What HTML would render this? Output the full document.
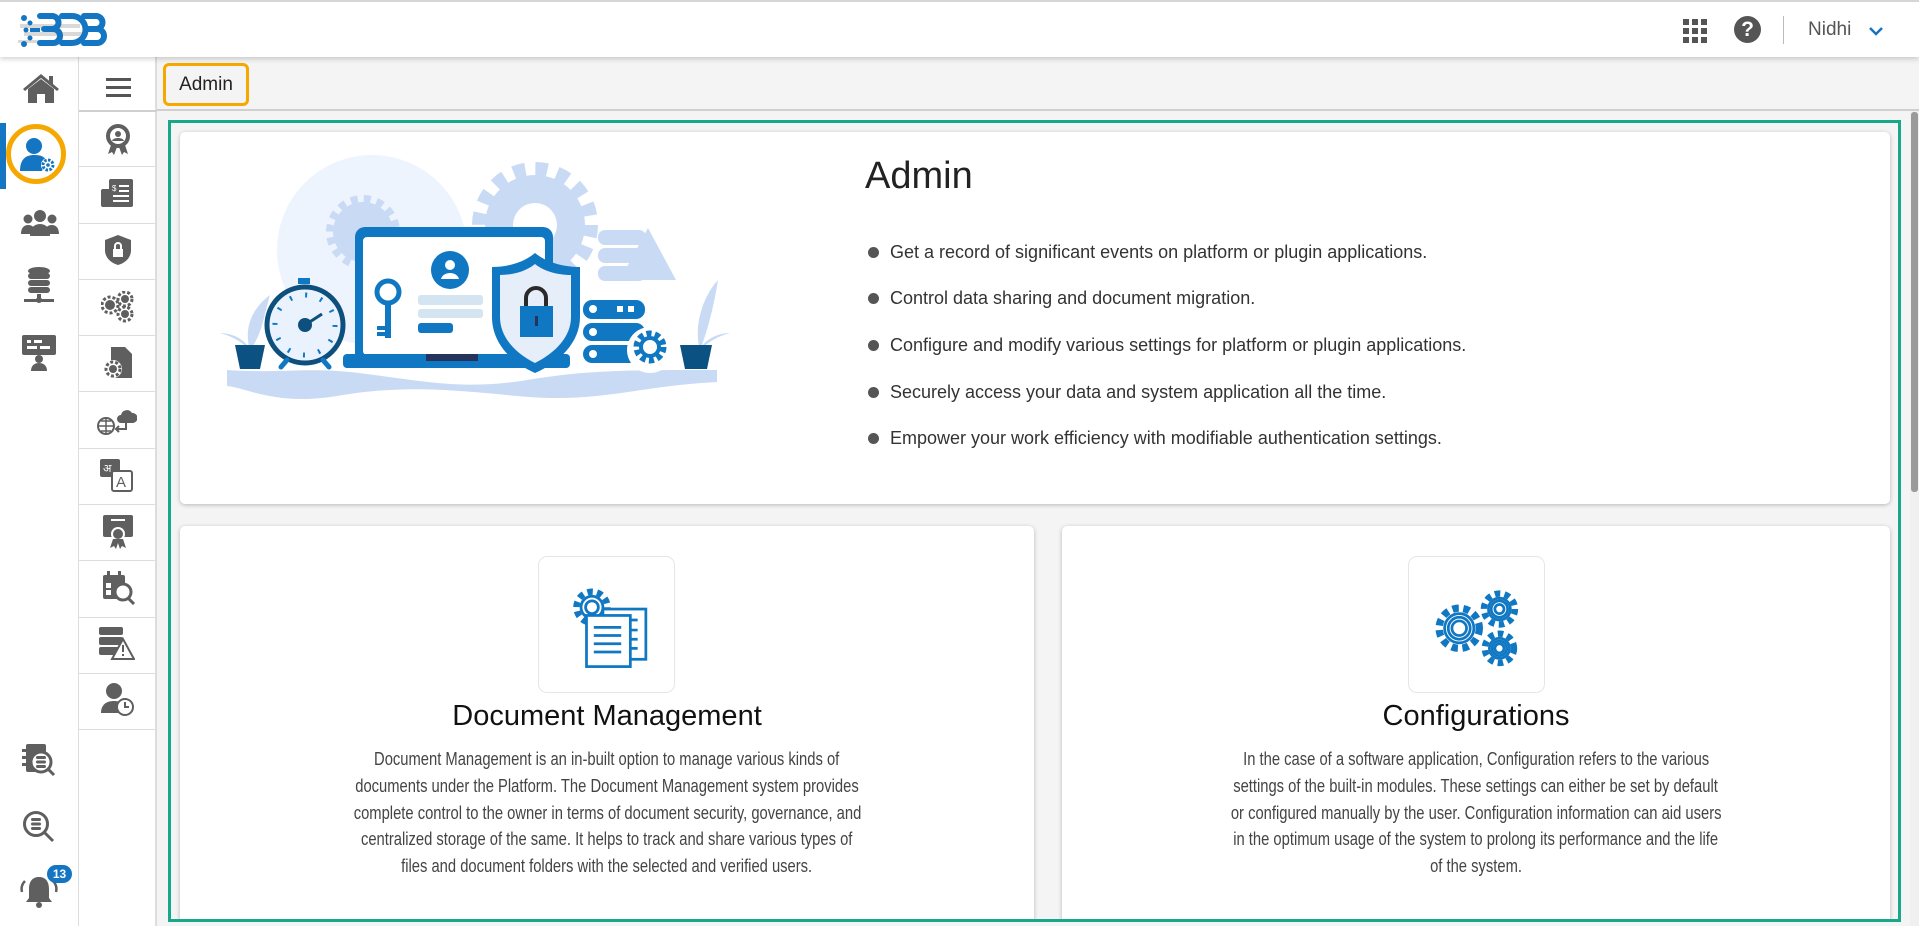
<!DOCTYPE html>
<html style="width:1919px;height:926px;overflow:hidden"><head><meta charset="utf-8"><style>
*{box-sizing:border-box;margin:0;padding:0}
body{width:1919px;height:926px;overflow:hidden;background:#f4f4f4;font-family:"Liberation Sans",sans-serif;position:relative}
.abs{position:absolute}
#hdr{left:0;top:0;width:1919px;height:57px;background:#fff;border-top:2px solid #d6d6d6;box-shadow:0 2px 5px rgba(0,0,0,.18);z-index:5}
#rail{left:0;top:57px;width:79px;height:869px;background:#fff;border-right:1px solid #ddd;overflow:hidden}
#side{left:79px;top:57px;width:78px;height:869px;background:#fff;border-right:2px solid #ddd}
.sep{position:absolute;left:0;width:78px;height:1px;background:#ddd}
#crumb{left:157px;top:57px;width:1762px;height:54px;background:#f4f4f4;border-bottom:2px solid #d0d0d0}
.card{position:absolute;background:#fff;border-radius:5px;box-shadow:0 1px 4px rgba(0,0,0,.25)}
.bl{position:absolute;left:890px;font-size:18px;color:#333;white-space:nowrap}
.dot{position:absolute;left:868px;width:11px;height:11px;border-radius:50%;background:#555}
.ttl{position:absolute;font-size:29px;color:#111;text-align:center}
.par{position:absolute;font-size:18px;color:#444;text-align:center;line-height:26.8px;white-space:nowrap}
.par span{display:inline-block;transform:scaleX(.82)}
.ib{position:absolute;width:137px;height:137px;border:1px solid #e6e6e6;border-radius:9px;background:#fff}
</style></head><body>

<div id="hdr" class="abs">
 <svg class="abs" style="left:16px;top:8px" width="96" height="42" viewBox="0 0 96 42">
  <g fill="#d9d9d9"><rect x="4" y="14" width="60" height="4"/><rect x="8" y="22" width="60" height="4"/><rect x="2" y="30" width="50" height="3"/></g>
  <g fill="none" stroke="#1475c2" stroke-width="6" stroke-linecap="round">
   <path d="M24 6h12a6 6 0 0 1 0 13h-8M28 19h9a7 7 0 0 1 0 14h-13"/>
   <path d="M46 6h10a13 13 0 0 1 0 27h-10"/>
   <path d="M68 6h12a6 6 0 0 1 0 13h-8M72 19h9a7 7 0 0 1 0 14h-13"/>
  </g>
  <g fill="#1475c2"><circle cx="8" cy="8" r="3"/><circle cx="14" cy="13" r="2.5"/><circle cx="10" cy="20" r="2.5"/><circle cx="14" cy="28" r="2.5"/><circle cx="8" cy="34" r="3"/><rect x="14" y="18" width="10" height="4"/></g>
 </svg>
 <svg class="abs" style="left:1683px;top:17px" width="24" height="24" viewBox="0 0 24 24" fill="#555">
  <rect x="0" y="0" width="6" height="6"/><rect x="9" y="0" width="6" height="6"/><rect x="18" y="0" width="6" height="6"/>
  <rect x="0" y="9" width="6" height="6"/><rect x="9" y="9" width="6" height="6"/><rect x="18" y="9" width="6" height="6"/>
  <rect x="0" y="18" width="6" height="6"/><rect x="9" y="18" width="6" height="6"/><rect x="18" y="18" width="6" height="6"/>
 </svg>
 <div class="abs" style="left:1734px;top:14px;width:27px;height:27px;border-radius:50%;background:#555;color:#fff;font-weight:bold;font-size:21px;text-align:center;line-height:27px">?</div>
 <div class="abs" style="left:1783px;top:14px;width:1px;height:28px;background:#bbb"></div>
 <div class="abs" style="left:1808px;top:17px;font-size:19px;color:#555">Nidhi</div>
 <svg class="abs" style="left:1868px;top:24px" width="16" height="10" viewBox="0 0 16 10"><path d="M2 2l6 6 6-6" stroke="#1475c2" stroke-width="2.5" fill="none"/></svg>
</div>

<div id="rail" class="abs">
 <svg class="abs" style="left:22px;top:15px" width="38" height="32" viewBox="0 0 38 32" fill="#5f5f5f"><path d="M19 2L1 17l2 2 16-13 16 13 2-2z"/><path d="M6 17l13-10 13 10v14h-9v-9h-8v9H6z"/><rect x="27" y="4" width="4" height="8"/></svg>
 <div class="abs" style="left:0;top:66px;width:6px;height:66px;background:#1475c2"></div>
 <div class="abs" style="left:6px;top:67px;width:60px;height:60px;border:5px solid #f5a800;border-radius:50%"></div>
 <svg class="abs" style="left:20px;top:80px" width="36" height="36" viewBox="0 0 36 36"><circle cx="14" cy="9" r="8" fill="#1475c2"/><path d="M0 34c0-12 6-16 14-16s10 2 12 5l-4 11z" fill="#1475c2"/><circle cx="28" cy="28" r="7" fill="#fff"/><circle cx="28" cy="28" r="5" fill="none" stroke="#1475c2" stroke-width="3" stroke-dasharray="2.5 1.4"/><circle cx="28" cy="28" r="1.8" fill="#1475c2"/></svg>
 <svg class="abs" style="left:21px;top:153px" width="38" height="26" viewBox="0 0 38 26" fill="#5f5f5f"><circle cx="19" cy="6" r="6"/><circle cx="7" cy="9" r="4.5"/><circle cx="31" cy="9" r="4.5"/><path d="M9 26c0-8 4-12 10-12s10 4 10 12z"/><path d="M0 24c0-6 3-9 7-9s6 2 6 4v5zM38 24c0-6-3-9-7-9s-6 2-6 4v5z"/></svg>
 <svg class="abs" style="left:24px;top:210px" width="30" height="36" viewBox="0 0 30 36" fill="#5f5f5f"><ellipse cx="15" cy="4" rx="11" ry="4"/><rect x="4" y="6" width="22" height="6" rx="3"/><rect x="4" y="13" width="22" height="6" rx="3"/><rect x="4" y="20" width="22" height="6" rx="3"/><rect x="13" y="27" width="4" height="5"/><rect x="0" y="32" width="30" height="3"/><circle cx="15" cy="33" r="3"/></svg>
 <svg class="abs" style="left:22px;top:278px" width="34" height="36" viewBox="0 0 34 36" fill="#5f5f5f"><rect x="0" y="0" width="34" height="20" rx="2"/><rect x="5" y="5" width="4" height="3" fill="#fff"/><rect x="12" y="5" width="8" height="3" fill="#fff"/><rect x="5" y="11" width="10" height="3" fill="#fff"/><rect x="18" y="11" width="10" height="3" fill="#fff"/><circle cx="17" cy="24" r="4"/><path d="M9 36c0-6 4-8 8-8s8 2 8 8z"/></svg>
 <svg class="abs" style="left:22px;top:687px" width="34" height="36" viewBox="0 0 34 36" fill="#5f5f5f"><rect x="4" y="0" width="20" height="28" rx="2"/><rect x="0" y="5" width="6" height="3"/><rect x="0" y="12" width="6" height="3"/><rect x="0" y="19" width="6" height="3"/><circle cx="19" cy="18" r="10" fill="#fff" stroke="#5f5f5f" stroke-width="3"/><rect x="14" y="12" width="10" height="3" rx="1.5"/><rect x="14" y="16.5" width="10" height="3" rx="1.5"/><rect x="14" y="21" width="10" height="3" rx="1.5"/><path d="M26 25l6 6" stroke="#5f5f5f" stroke-width="3"/></svg>
 <svg class="abs" style="left:22px;top:753px" width="34" height="34" viewBox="0 0 34 34"><circle cx="14" cy="14" r="11.5" fill="none" stroke="#5f5f5f" stroke-width="3"/><g fill="#5f5f5f"><rect x="9" y="8" width="10" height="3" rx="1.5"/><rect x="9" y="12.5" width="10" height="3" rx="1.5"/><rect x="9" y="17" width="10" height="3" rx="1.5"/></g><path d="M23 23l8 8" stroke="#5f5f5f" stroke-width="3"/></svg>
 <svg class="abs" style="left:20px;top:812px" width="38" height="42" viewBox="0 0 38 42" fill="#5f5f5f"><path d="M19 8c-7 0-10 5-10 12v9l-3 4h26l-3-4v-9c0-7-3-12-10-12z"/><circle cx="19" cy="36" r="3"/><path d="M5 12c-3 3-4 7-3 11M33 12c3 3 4 7 3 11" stroke="#5f5f5f" stroke-width="2.5" fill="none"/></svg>
 <div class="abs" style="left:47px;top:808px;width:25px;height:18px;border-radius:9px;background:#1475c2;color:#fff;font-size:12px;font-weight:bold;text-align:center;line-height:18px">13</div>
</div>

<div id="side" class="abs">
 <div class="abs" style="left:27px;top:21px;width:25px;height:3px;background:#555;box-shadow:0 8px 0 #555,0 16px 0 #555"></div>
 <div class="sep" style="top:53px;height:2px;background:#d0d0d0"></div>
 <div class="sep" style="top:109px"></div><div class="sep" style="top:166px"></div><div class="sep" style="top:222px"></div><div class="sep" style="top:278px"></div><div class="sep" style="top:334px"></div><div class="sep" style="top:391px"></div><div class="sep" style="top:447px"></div><div class="sep" style="top:503px"></div><div class="sep" style="top:560px"></div><div class="sep" style="top:616px"></div><div class="sep" style="top:672px"></div>
 <svg class="abs" style="left:24px;top:66px" width="30" height="32" viewBox="0 0 30 32" fill="#5f5f5f"><circle cx="15" cy="13" r="12"/><circle cx="15" cy="13" r="8" fill="#fff"/><circle cx="15" cy="11" r="3"/><path d="M9 18c1-4 11-4 12 0z"/><path d="M8 22l-3 9 4-2 2 3 3-8zM22 22l3 9-4-2-2 3-3-8z"/></svg>
 <svg class="abs" style="left:22px;top:122px" width="34" height="30" viewBox="0 0 34 30" fill="#5f5f5f"><rect x="8" y="0" width="24" height="28" rx="2"/><rect x="0" y="10" width="10" height="18" rx="2"/><g fill="#fff"><rect x="18" y="6" width="10" height="2"/><rect x="18" y="11" width="10" height="2"/><rect x="12" y="16" width="16" height="2"/><rect x="12" y="21" width="16" height="2"/></g><text x="11" y="12" font-size="8" fill="#fff" font-family="Liberation Sans">$</text></svg>
 <svg class="abs" style="left:26px;top:178px" width="26" height="30" viewBox="0 0 26 30" fill="#5f5f5f"><path d="M13 0l13 5v10c0 8-6 13-13 15C6 28 0 23 0 15V5z"/><rect x="8" y="14" width="10" height="8" fill="#fff"/><path d="M10 14v-3a3 3 0 0 1 6 0v3" stroke="#fff" stroke-width="2" fill="none"/></svg>
 <svg class="abs" style="left:22px;top:234px" width="34" height="32" viewBox="0 0 34 32" fill="#5f5f5f"><circle cx="9" cy="14" r="8" stroke="#5f5f5f" stroke-width="3" stroke-dasharray="3 2" fill="none"/><circle cx="9" cy="14" r="5"/><circle cx="24" cy="8" r="7" stroke="#5f5f5f" stroke-width="3" stroke-dasharray="3 2" fill="none"/><circle cx="24" cy="8" r="4"/><circle cx="24" cy="23" r="7" stroke="#5f5f5f" stroke-width="3" stroke-dasharray="3 2" fill="none"/><circle cx="24" cy="23" r="4"/></svg>
 <svg class="abs" style="left:24px;top:290px" width="30" height="32" viewBox="0 0 30 32" fill="#5f5f5f"><path d="M8 0h14l7 7v24H8z"/><circle cx="10" cy="22" r="9" fill="#fff"/><circle cx="10" cy="22" r="7" stroke="#5f5f5f" stroke-width="3" stroke-dasharray="3 2" fill="none"/><circle cx="10" cy="22" r="4"/></svg>
 <svg class="abs" style="left:18px;top:346px" width="40" height="32" viewBox="0 0 40 32"><circle cx="9" cy="23" r="8" fill="none" stroke="#5f5f5f" stroke-width="2"/><path d="M1 23h16M9 15v16M4 18h10M4 28h10" stroke="#5f5f5f" stroke-width="1.5"/><path d="M24 12a6 6 0 0 1 11-2 5 5 0 0 1 1 10H24a4 4 0 0 1 0-8z" fill="#5f5f5f"/><path d="M29 18v8h-9M22 23l-3 3 3 3" stroke="#5f5f5f" stroke-width="2" fill="none"/></svg>
 <svg class="abs" style="left:21px;top:402px" width="34" height="34" viewBox="0 0 34 34"><rect x="0" y="0" width="20" height="18" rx="2" fill="#5f5f5f"/><text x="3" y="13" font-size="11" fill="#fff" font-family="Noto Sans CJK SC,sans-serif">अ</text><rect x="12" y="12" width="20" height="20" rx="2" fill="#fff" stroke="#5f5f5f" stroke-width="2"/><text x="16" y="28" font-size="15" fill="#5f5f5f" font-family="Liberation Sans">A</text></svg>
 <svg class="abs" style="left:24px;top:458px" width="30" height="34" viewBox="0 0 30 34" fill="#5f5f5f"><rect x="0" y="0" width="30" height="22" rx="2"/><rect x="8" y="4" width="14" height="2" fill="#fff"/><circle cx="15" cy="19" r="7" fill="#fff"/><circle cx="15" cy="19" r="5"/><path d="M10 24l-3 9 4-2 2 3 2-6 2 6 2-3 4 2-3-9z"/></svg>
 <svg class="abs" style="left:24px;top:514px" width="32" height="34" viewBox="0 0 32 34" fill="#5f5f5f"><rect x="0" y="4" width="22" height="24" rx="2"/><rect x="4" y="0" width="3" height="6"/><rect x="15" y="0" width="3" height="6"/><rect x="3" y="12" width="5" height="5" fill="#fff"/><rect x="3" y="19" width="5" height="5" fill="#fff"/><circle cx="20" cy="21" r="8" fill="#fff" stroke="#5f5f5f" stroke-width="3"/><path d="M25 27l6 6" stroke="#5f5f5f" stroke-width="3"/></svg>
 <svg class="abs" style="left:20px;top:570px" width="36" height="34" viewBox="0 0 36 34" fill="#5f5f5f"><rect x="0" y="0" width="24" height="8" rx="2"/><rect x="0" y="10" width="24" height="8" rx="2"/><rect x="0" y="20" width="20" height="8" rx="2"/><path d="M24 12l11 20H13z" fill="#fff" stroke="#5f5f5f" stroke-width="2"/><rect x="23" y="18" width="2" height="7"/><rect x="23" y="27" width="2" height="2"/></svg>
 <svg class="abs" style="left:22px;top:626px" width="34" height="34" viewBox="0 0 34 34" fill="#5f5f5f"><circle cx="13" cy="8" r="8"/><path d="M0 30c0-8 5-12 13-12 4 0 7 1 9 3l-4 9z"/><circle cx="24" cy="24" r="8" fill="#fff" stroke="#5f5f5f" stroke-width="2"/><path d="M24 19v5h4" stroke="#5f5f5f" stroke-width="2" fill="none"/></svg>
</div>

<div id="crumb" class="abs">
 <div class="abs" style="left:6px;top:6px;width:86px;height:43px;border:3px solid #f5a800;border-radius:6px;font-size:19px;color:#222;text-align:center;line-height:37px">Admin</div>
</div>

<div class="abs" style="left:1910px;top:111px;width:9px;height:815px;background:#f0f0f0"></div>
<div class="abs" style="left:1911px;top:112px;width:7px;height:380px;background:#9a9a9a;border-radius:3px"></div>

<div class="abs" style="left:168px;top:120px;width:1733px;height:802px;border:3px solid #17a88a;overflow:hidden">
 <div style="position:absolute;left:-171px;top:-123px;width:1919px;height:926px">
  <div class="card" style="left:180px;top:132px;width:1710px;height:372px"></div>
  <svg class="abs" style="left:215px;top:140px" width="530" height="270" viewBox="0 0 530 270">
   <circle cx="157" cy="110" r="95" fill="#eef4fd"/>
   <g fill="#c9daf5">
    <circle cx="320" cy="85" r="50"/><circle cx="148" cy="92" r="30"/>
    <g stroke="#c9daf5" stroke-width="14" stroke-dasharray="12 10"><circle cx="320" cy="85" r="56" fill="none"/></g>
    <g stroke="#c9daf5" stroke-width="8" stroke-dasharray="7 6"><circle cx="148" cy="92" r="33" fill="none"/></g>
    <path d="M12 230c60 4 80 -4 140 4s100 16 160 6 100 -10 190 -10v12c-80 4-120 22-200 14s-120-10-180 0-90-8-110-10z"/>
    <rect x="383" y="90" width="48" height="15" rx="7"/><rect x="383" y="108" width="48" height="15" rx="7"/><rect x="383" y="126" width="48" height="15" rx="7"/>
    <path d="M433 88l28 52h-56z"/>
   </g>
   <circle cx="320" cy="85" r="22" fill="#fff"/>
   <rect x="140" y="87" width="198" height="140" rx="10" fill="#1077c3"/>
   <rect x="148" y="97" width="182" height="118" rx="4" fill="#fff"/>
   <rect x="128" y="214" width="227" height="14" rx="4" fill="#1077c3"/>
   <rect x="211" y="214" width="52" height="7" fill="#26335a"/>
   <circle cx="235" cy="130" r="19" fill="#1077c3"/><circle cx="235" cy="125" r="5" fill="#fff"/><path d="M226 139c2-8 16-8 18 0z" fill="#fff"/>
   <rect x="203" y="155" width="65" height="10" rx="3" fill="#d4e4f0"/><rect x="203" y="169" width="65" height="9" rx="3" fill="#d4e4f0"/>
   <rect x="203" y="183" width="35" height="10" rx="3" fill="#1077c3"/>
   <circle cx="173" cy="152" r="11" fill="none" stroke="#1077c3" stroke-width="5"/><rect x="170" y="163" width="6" height="35" fill="#1077c3"/><rect x="162" y="186" width="9" height="4" fill="#1077c3"/><rect x="162" y="192" width="9" height="4" fill="#1077c3"/>
   <path d="M320 113c12 10 30 14 45 14v50c0 25-20 45-45 56-25-11-43-31-43-56v-50c15 0 31-4 43-14z" fill="#1077c3"/>
   <path d="M320 124c10 8 24 11 36 11v42c0 20-16 36-36 46-20-10-35-26-35-46v-42c12 0 25-3 35-11z" fill="#e6eff9"/>
   <path d="M311 167v-9a10 10 0 0 1 20 0v9" stroke="#2a2a2a" stroke-width="4" fill="none"/>
   <rect x="305" y="166" width="33" height="31" fill="#1077c3"/><rect x="320" y="176" width="3" height="10" fill="#26335a"/>
   <g fill="#1077c3"><rect x="368" y="160" width="62" height="19" rx="9"/><rect x="368" y="183" width="62" height="18" rx="9"/><rect x="368" y="205" width="62" height="18" rx="9"/></g>
   <g fill="#fff"><circle cx="378" cy="169" r="4"/><circle cx="378" cy="192" r="4"/><circle cx="378" cy="214" r="4"/><rect x="402" y="166" width="6" height="6"/><rect x="413" y="166" width="6" height="6"/></g>
   <circle cx="435" cy="210" r="23" fill="#fff"/>
   <circle cx="435" cy="207" r="13" fill="none" stroke="#1077c3" stroke-width="7" stroke-dasharray="5 3.2"/><circle cx="435" cy="207" r="9" fill="none" stroke="#1077c3" stroke-width="4"/>
   <path d="M35 210c-6-20 0-40 20-55-6 20-8 40-20 55zM35 210c-10-10-22-15-30-17 10 0 25 5 30 17z" fill="#c9daf5"/>
   <path d="M485 210c-6-20 0-50 18-70-4 25-10 50-18 70zM485 210c10-10 22-15 30-17-10 0-25 5-30 17z" fill="#c9daf5"/>
   <path d="M20 205h30l-5 24h-20zM465 205h32l-5 24h-22z" fill="#0b5283"/>
   <rect x="83" y="138" width="12" height="6" fill="#1077c3"/>
   <circle cx="90" cy="185" r="38" fill="#eaf2fd" stroke="#0d4f7d" stroke-width="5"/>
   <circle cx="90" cy="185" r="30" fill="none" stroke="#1077c3" stroke-width="5" stroke-dasharray="2 13.7"/>
   <circle cx="90" cy="185" r="7" fill="#0d4f7d"/><path d="M90 185l17-11" stroke="#0d4f7d" stroke-width="3"/>
   <path d="M72 220l-6 7M108 220l6 7" stroke="#1077c3" stroke-width="5" stroke-linecap="round"/>
  </svg>
  <div class="abs" style="left:865px;top:155px;font-size:38px;color:#222">Admin</div>
  <div class="dot" style="top:247px"></div><div class="bl" style="top:242px">Get a record of significant events on platform or plugin applications.</div>
  <div class="dot" style="top:293px"></div><div class="bl" style="top:288px">Control data sharing and document migration.</div>
  <div class="dot" style="top:340px"></div><div class="bl" style="top:335px">Configure and modify various settings for platform or plugin applications.</div>
  <div class="dot" style="top:387px"></div><div class="bl" style="top:382px">Securely access your data and system application all the time.</div>
  <div class="dot" style="top:433px"></div><div class="bl" style="top:428px">Empower your work efficiency with modifiable authentication settings.</div>

  <div class="card" style="left:180px;top:526px;width:854px;height:420px"></div>
  <div class="card" style="left:1062px;top:526px;width:828px;height:420px"></div>
  <div class="ib" style="left:538px;top:556px">
   <svg width="137" height="137" viewBox="0 0 150 150" fill="none" stroke="#1077c3" stroke-width="3">
    <circle cx="58" cy="55" r="17" stroke-width="7" stroke-dasharray="6 4.7"/><circle cx="58" cy="55" r="12" fill="#fff"/><circle cx="58" cy="55" r="7"/>
    <rect x="70" y="57" width="47" height="55" fill="#fff"/><rect x="52" y="64" width="48" height="56" fill="#fff"/>
    <path d="M60 77h30M60 86h30M60 95h30M60 104h30M100 69h8M100 80h8M100 90h8M100 100h8"/>
   </svg>
  </div>
  <div class="ib" style="left:1408px;top:556px">
   <svg width="137" height="137" viewBox="0 0 150 150" fill="none" stroke="#1077c3" stroke-width="3">
    <circle cx="55" cy="78" r="22" stroke-width="8" stroke-dasharray="7 5"/><circle cx="55" cy="78" r="16" fill="#fff"/><circle cx="55" cy="78" r="12"/><circle cx="55" cy="78" r="8"/>
    <circle cx="99" cy="57" r="17" stroke-width="7" stroke-dasharray="6 4.7"/><circle cx="99" cy="57" r="12" fill="#fff"/><circle cx="99" cy="57" r="9"/><circle cx="99" cy="57" r="5"/>
    <circle cx="99" cy="100" r="16" stroke-width="7" stroke-dasharray="6 4.5"/><circle cx="99" cy="100" r="11" fill="#fff"/><circle cx="99" cy="100" r="8"/><circle cx="99" cy="100" r="5"/>
   </svg>
  </div>
  <div class="ttl" style="left:180px;width:854px;top:700px">Document Management</div>
  <div class="ttl" style="left:1062px;width:828px;top:700px">Configurations</div>
  <div class="par" style="left:180px;width:854px;top:746px">
   <span>Document Management is an in-built option to manage various kinds of</span><br>
   <span>documents under the Platform. The Document Management system provides</span><br>
   <span>complete control to the owner in terms of document security, governance, and</span><br>
   <span>centralized storage of the same. It helps to track and share various types of</span><br>
   <span>files and document folders with the selected and verified users.</span>
  </div>
  <div class="par" style="left:1062px;width:828px;top:746px">
   <span>In the case of a software application, Configuration refers to the various</span><br>
   <span>settings of the built-in modules. These settings can either be set by default</span><br>
   <span>or configured manually by the user. Configuration information can aid users</span><br>
   <span>in the optimum usage of the system to prolong its performance and the life</span><br>
   <span>of the system.</span>
  </div>
 </div>
</div>
</body></html>
